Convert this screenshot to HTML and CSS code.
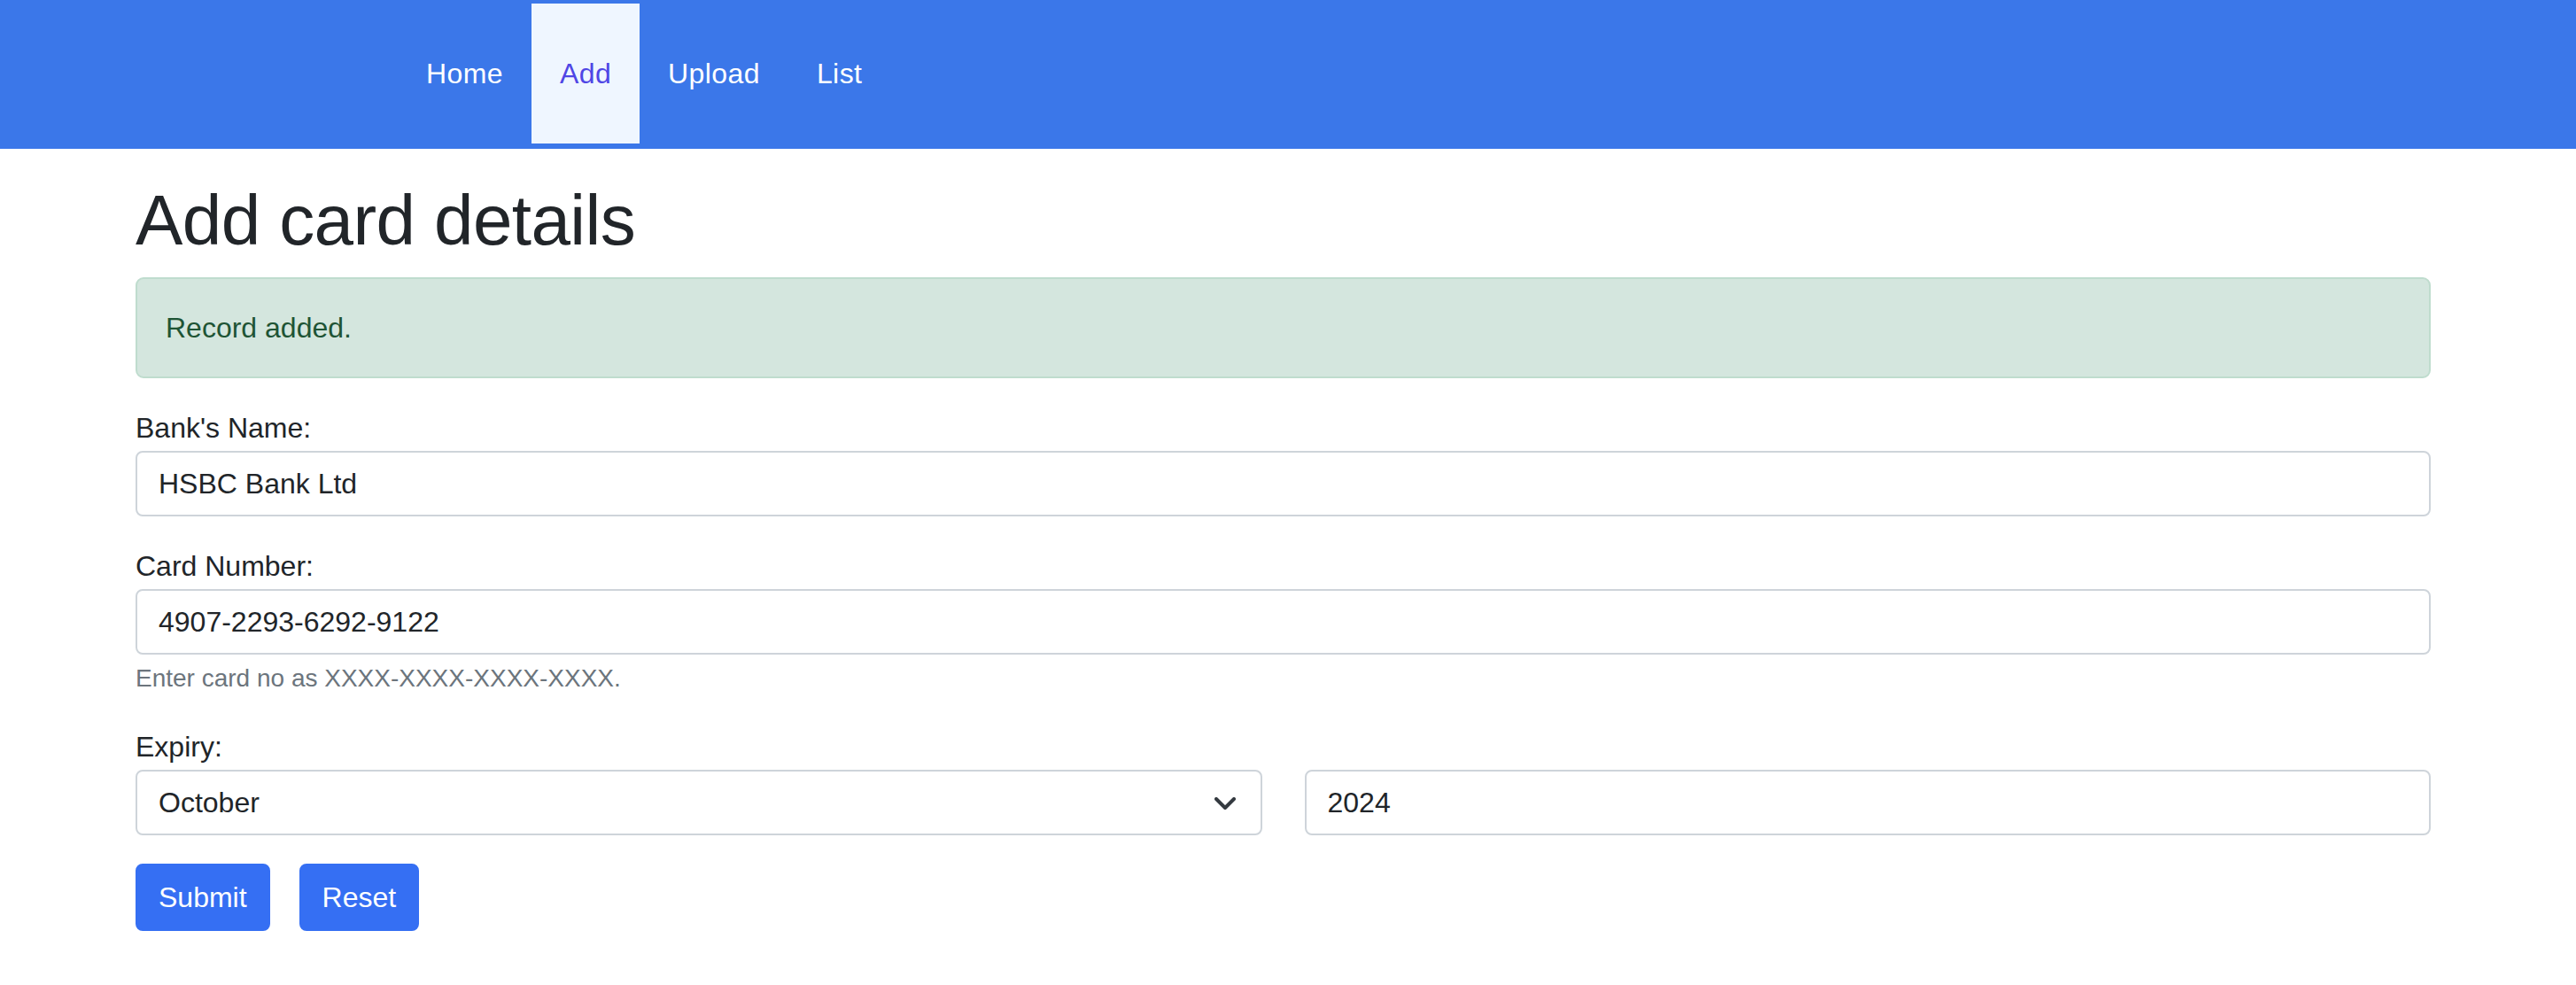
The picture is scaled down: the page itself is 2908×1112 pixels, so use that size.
FILE: index.html
```html
<!DOCTYPE html>
<html lang="en">
<head>
<meta charset="utf-8">
<title>Add card details</title>
<link rel="stylesheet" href="styles.css">
</head>
<body>
<nav class="navbar">
  <ul class="nav-list">
    <li><a class="nav-link" href="#">Home</a></li>
    <li><a class="nav-link active" href="#">Add</a></li>
    <li><a class="nav-link" href="#">Upload</a></li>
    <li><a class="nav-link" href="#">List</a></li>
  </ul>
</nav>
<main class="container">
  <h1 class="title">Add card details</h1>
  <div class="alert">Record added.</div>
  <form class="card-form">
    <div class="group">
      <label class="label" for="bank">Bank's Name:</label>
      <input class="control" id="bank" type="text" value="HSBC Bank Ltd">
    </div>
    <div class="group">
      <label class="label" for="card">Card Number:</label>
      <input class="control" id="card" type="text" value="4907-2293-6292-9122">
      <div class="help">Enter card no as XXXX-XXXX-XXXX-XXXX.</div>
    </div>
    <div class="group">
      <label class="label" for="month">Expiry:</label>
      <div class="expiry-row">
        <div class="select-wrap">
          <select class="control select" id="month">
            <option>October</option>
          </select>
          <svg class="chevron" width="24" height="14" viewBox="0 0 24 14" aria-hidden="true">
            <path d="M2 2 L12 12 L22 2" fill="none" stroke="#343a40" stroke-width="4" stroke-linecap="round" stroke-linejoin="round"/>
          </svg>
        </div>
        <input class="control" id="year" type="text" value="2024">
      </div>
    </div>
    <div class="actions">
      <button class="btn" type="button">Submit</button>
      <button class="btn" type="button">Reset</button>
    </div>
  </form>
</main>
</body>
</html>
```

FILE: styles.css
```css
* { box-sizing: border-box; }

html, body {
  margin: 0;
  padding: 0;
  background: #ffffff;
}

body {
  font-family: "Liberation Sans", Arial, sans-serif;
  font-size: 32px;
  line-height: 48px;
  color: #212529;
}

.navbar {
  background: #3b77e9;
  height: 168px;
  padding: 4px 0 6px 0;
  display: flex;
}

.nav-list {
  list-style: none;
  margin: 0 0 0 449px;
  padding: 0;
  display: flex;
  align-items: stretch;
}

.nav-list li {
  display: flex;
}

.nav-link {
  display: flex;
  align-items: center;
  padding: 0 32px;
  color: #ffffff;
  text-decoration: none;
  font-size: 32px;
  line-height: 48px;
  letter-spacing: 0.4px;
}

.nav-link.active {
  background: #eff6ff;
  color: #4f46e5;
}

.container {
  margin-left: 153px;
  width: 2591px;
  padding-top: 33px;
}

.title {
  margin: 0 0 16px 0;
  font-size: 80px;
  line-height: 96px;
  font-weight: 500;
  letter-spacing: -0.6px;
  color: #212529;
}

.alert {
  background: #d4e6de;
  border: 2px solid #bfdcce;
  border-radius: 9px;
  color: #1e5435;
  padding: 31px 32px;
  margin-bottom: 32px;
}

.card-form {
  display: flex;
  flex-direction: column;
}

.group {
  margin-bottom: 32px;
}

.label {
  display: block;
  margin-bottom: 2px;
}

.control {
  display: block;
  width: 100%;
  height: 74px;
  padding: 0 24px;
  font-family: "Liberation Sans", Arial, sans-serif;
  font-size: 32px;
  color: #212529;
  background: #ffffff;
  border: 2px solid #ced4da;
  border-radius: 8px;
  outline: none;
}

.help {
  margin-top: 6px;
  font-size: 28px;
  line-height: 42px;
  color: #6c757d;
}

.expiry-row {
  display: grid;
  grid-template-columns: 1fr 1fr;
  column-gap: 48px;
}

.select-wrap {
  position: relative;
}

.select {
  appearance: none;
  -webkit-appearance: none;
  padding-right: 80px;
}

.chevron {
  position: absolute;
  right: 30px;
  top: 31px;
  pointer-events: none;
}

.actions {
  display: flex;
  gap: 33px;
}

.btn {
  height: 76px;
  padding: 0 24px;
  font-family: "Liberation Sans", Arial, sans-serif;
  font-size: 32px;
  line-height: 48px;
  color: #ffffff;
  background: #356ff3;
  border: 2px solid #356ff3;
  border-radius: 8px;
}
```
